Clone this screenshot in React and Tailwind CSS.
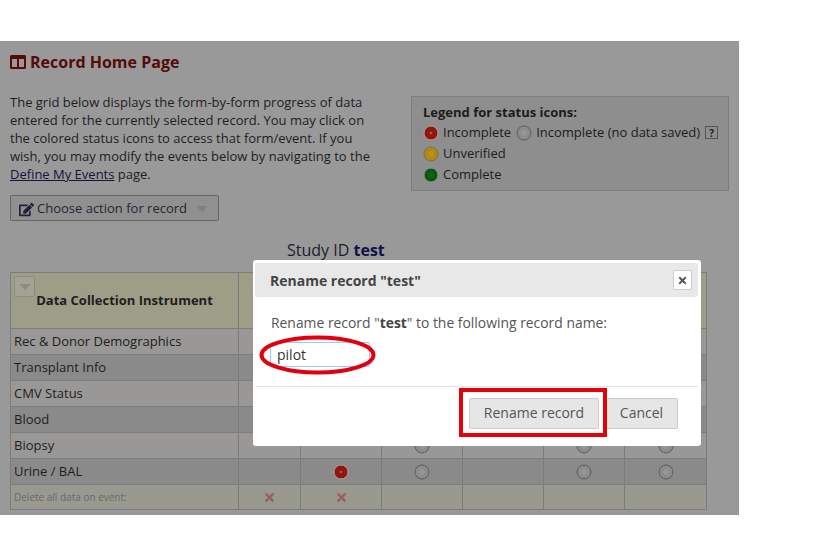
import { FaColumns, FaEdit, FaTimes } from 'react-icons/fa';

const instruments = [
  { name: 'Rec & Donor Demographics', icons: [] },
  { name: 'Transplant Info', icons: [] },
  { name: 'CMV Status', icons: [] },
  { name: 'Blood', icons: [] },
  { name: 'Biopsy', icons: [null, null, 'gray', null, 'gray', 'gray'] },
  { name: 'Urine / BAL', icons: [null, 'red', 'gray', null, 'gray', 'gray'] },
];

const dotColors = {
  red: { ring: '#b3a08e', fill: '#8e1712', core: '#c8503c', r: 1.3 },
  gray: { ring: '#5c5c5c', fill: '#8c8c8c', core: '#969696', r: 3 },
  yellow: { ring: '#77704c', fill: '#b08a12', core: '#b8921a', r: 3 },
  green: { ring: '#7f9f7f', fill: '#0f5412', core: '#17601a', r: 3 },
};

/** Round status icon used in the legend and the grid. */
function StatusDot({ color }) {
  const c = dotColors[color];
  return (
    <svg width="16" height="16" viewBox="0 0 16 16" className="shrink-0">
      <circle cx="8" cy="8" r="7" fill={c.fill} stroke={c.ring} strokeWidth="1" />
      <circle cx="8" cy="8" r={c.r} fill={c.core} />
    </svg>
  );
}

function LegendBox() {
  return (
    <div className="w-[318px] h-[95px] mt-[55px] mr-[10px] border border-[#7d7d7d] bg-[#8e8e8e] pl-[11px] pt-[6px] text-[13px] text-[#1c1c1c]">
      <div className="font-bold leading-[19px]">Legend for status icons:</div>
      <div className="flex items-center h-[21px]">
        <StatusDot color="red" />
        <span className="ml-[4px]">Incomplete</span>
        <span className="ml-[5px]"><StatusDot color="gray" /></span>
        <span className="ml-[4px]">Incomplete (no data saved)</span>
        <span className="ml-[5px] w-[13px] h-[13px] border border-[#555] flex items-center justify-center text-[10px] font-bold leading-none">?</span>
      </div>
      <div className="flex items-center h-[21px]">
        <StatusDot color="yellow" />
        <span className="ml-[4px]">Unverified</span>
      </div>
      <div className="flex items-center h-[21px]">
        <StatusDot color="green" />
        <span className="ml-[4px]">Complete</span>
      </div>
    </div>
  );
}

function GridTable() {
  return (
    <table className="table-fixed border-collapse w-[696px] ml-[10px] mt-[11px] text-[13px] text-[#1e1e1e]">
      <colgroup>
        <col className="w-[228px]" />
        <col className="w-[62px]" />
        <col className="w-[81px]" />
        <col className="w-[81px]" />
        <col className="w-[81px]" />
        <col className="w-[81px]" />
        <col className="w-[82px]" />
      </colgroup>
      <thead>
        <tr className="h-[56px] bg-[#9d9d88]">
          <th className="relative border border-[#7c7c7c] font-bold text-[13px] text-center pt-[1px]">
            <span className="absolute left-[3px] top-[3px] w-[21px] h-[21px] rounded-[2px] border border-[#8d8d7e] bg-[#a3a395] flex items-center justify-center">
              <span className="w-0 h-0 border-x-[6px] border-x-transparent border-t-[6px] border-t-[#8b8b80]" />
            </span>
            <span>Data Collection Instrument</span>
          </th>
          {[0, 1, 2, 3, 4, 5].map((i) => (
            <th key={i} className="border border-[#7c7c7c]" />
          ))}
        </tr>
      </thead>
      <tbody>
        {instruments.map((row, r) => (
          <tr key={row.name} className={r % 2 === 0 ? 'h-[26px] bg-[#999896]' : 'h-[26px] bg-[#8a8a8a]'}>
            <td className="border border-[#7c7c7c] pl-[3px]">{row.name}</td>
            {[0, 1, 2, 3, 4, 5].map((i) => (
              <td key={i} className="border border-[#7c7c7c]">
                {row.icons[i] && (
                  <div className="flex justify-center">
                    <StatusDot color={row.icons[i]} />
                  </div>
                )}
              </td>
            ))}
          </tr>
        ))}
        <tr className="h-[25px] bg-[#999990]">
          <td className="border border-[#7c7c7c] pl-[3px] text-[10px] text-[#6a6a66]">Delete all data on event:</td>
          {[0, 1, 2, 3, 4, 5].map((i) => (
            <td key={i} className="border border-[#7c7c7c]">
              {i < 2 && (
                <div className="flex justify-center">
                  <FaTimes className="text-[#96605c] text-[13px]" />
                </div>
              )}
            </td>
          ))}
        </tr>
      </tbody>
    </table>
  );
}

function RenameDialog() {
  return (
    <div className="absolute left-[253px] top-[219px] w-[448px] h-[186px] bg-white rounded-[3px] pl-[2px] pr-[3px] py-[3px] text-[#555]">
      <div className="flex items-center justify-between h-[34px] bg-[#e8e8e8] rounded-[3px] pl-[16px] pr-[6px]">
        <span className="font-bold text-[14px] text-[#444] relative -left-px">Rename record "test"</span>
        <span className="w-[19px] h-[20px] bg-white border border-[#ccc] rounded-[2px] flex items-center justify-center">
          <FaTimes className="text-[#555] text-[11px]" />
        </span>
      </div>
      <div className="pl-[16px] pt-[16px] text-[13.9px] leading-[19px]">
        Rename record "<b className="text-[#444]">test</b>" to the following record name:
      </div>
      <div className="ml-[15px] mt-[10px] w-[100px] h-[25px] border border-[#9ecaed] rounded-[2px] pl-[6px] text-[14px] leading-[23px] text-[#333]">
        pilot
      </div>
      <div className="mt-[19px] border-t border-[#e3e3e3] flex justify-end gap-[6px] pt-[11px] pr-[20px]">
        <button className="w-[130px] h-[31px] pb-[2px] bg-[#e6e6e6] border border-[#ccc] rounded-[2px] text-[14px] text-[#555]">Rename record</button>
        <button className="w-[73px] h-[31px] pb-[2px] bg-[#e6e6e6] border border-[#ccc] rounded-[2px] text-[14px] text-[#555]">Cancel</button>
      </div>
    </div>
  );
}

export default function App() {
  return (
    <div className="w-[831px] h-[554px] bg-white overflow-hidden pt-[41px] font-['Open_Sans',sans-serif]">
      <div className="relative w-[739px] h-[474px] bg-[#999999]">
        <div className="flex justify-between">
          <div className="w-[370px] pl-[10px]">
            <h1 className="flex items-center gap-[4px] mt-[10px] h-[22px] text-[16px] font-bold text-[#560a0a]">
              <FaColumns className="text-[16px]" />
              Record Home Page
            </h1>
            <p className="mt-[20px] text-[13px] leading-[18px] text-[#1e1e1e] whitespace-nowrap">
              The grid below displays the form-by-form progress of data<br />
              entered for the currently selected record. You may click on<br />
              the colored status icons to access that form/event. If you<br />
              wish, you may modify the events below by navigating to the<br />
              <a className="underline text-[#14143c]">Define My Events</a> page.
            </p>
            <button className="flex items-center mt-[12px] w-[209px] h-[26px] pt-[2px] border border-[#666] rounded-[2px] bg-[#909090] pl-[8px] text-[13px] text-[#262636]">
              <FaEdit className="text-[15px] text-[#20203a]" />
              <span className="ml-[3px]">Choose action for record</span>
              <span className="ml-[9px] w-0 h-0 border-x-[6px] border-x-transparent border-t-[6px] border-t-[#808080]" />
            </button>
          </div>
          <LegendBox />
        </div>
        <div className="mt-[18px] pl-[287px] text-[16px] leading-[22px] text-[#1c1c30]">
          Study ID <b className="text-[#10104a]">test</b>
        </div>
        <GridTable />
        <RenameDialog />
        {/* red markup drawn over the screenshot */}
        <svg width="120" height="44" viewBox="0 0 120 44" className="absolute left-[258px] top-[293px]">
          <ellipse cx="59.5" cy="21" rx="56" ry="17.5" fill="none" stroke="#e0000f" strokeWidth="4" />
        </svg>
        <div className="absolute left-[459px] top-[347px] w-[148px] h-[49px] border-[4px] border-[#e6000a]" />
      </div>
    </div>
  );
}
